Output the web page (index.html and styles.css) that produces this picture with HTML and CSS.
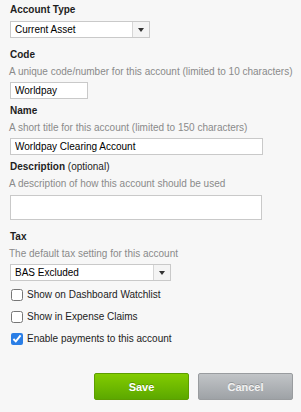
FILE: index.html
```html
<!DOCTYPE html>
<html lang="en">

<head>
    <meta charset="UTF-8">
    <meta name="viewport" content="width=device-width, initial-scale=1.0">
    <title>Edit Account</title>
    <link rel="stylesheet" href="styles.css">
</head>

<body>
    <form class="account-form">
        <!-- Account type -->
        <div class="field field-wide">
            <label class="field-label">Account Type</label>
            <div class="select select-type">
                <span class="select-value">Current Asset</span>
                <span class="select-arrow"></span>
            </div>
        </div>
        <!-- Code -->
        <div class="field">
            <label class="field-label">Code</label>
            <div class="field-help">A unique code/number for this account (limited to 10 characters)</div>
            <input type="text" class="text-input input-code" value="Worldpay">
        </div>
        <!-- Name -->
        <div class="field">
            <label class="field-label">Name</label>
            <div class="field-help">A short title for this account (limited to 150 characters)</div>
            <input type="text" class="text-input input-name" value="Worldpay Clearing Account">
        </div>
        <!-- Description -->
        <div class="field field-wide">
            <label class="field-label">Description <span class="optional">(optional)</span></label>
            <div class="field-help">A description of how this account should be used</div>
            <textarea class="text-input input-desc"></textarea>
        </div>
        <!-- Tax -->
        <div class="field">
            <label class="field-label">Tax</label>
            <div class="field-help">The default tax setting for this account</div>
            <div class="select select-tax">
                <span class="select-value">BAS Excluded</span>
                <span class="select-arrow"></span>
            </div>
        </div>
        <!-- Options -->
        <div class="options">
            <label class="check-row"><input type="checkbox"> Show on Dashboard Watchlist</label>
            <label class="check-row"><input type="checkbox"> Show in Expense Claims</label>
            <label class="check-row"><input type="checkbox" checked> Enable payments to this account</label>
        </div>
        <!-- Buttons -->
        <div class="actions">
            <button type="button" class="btn btn-save">Save</button>
            <button type="button" class="btn btn-cancel">Cancel</button>
        </div>
    </form>
</body>

</html>
```

FILE: styles.css
```css
body {
    background-color: #f7f7f7;
    font-family: 'Liberation Sans', Arial, sans-serif;
    font-size: 10px;
    color: #222;
    margin: 0;
    padding: 4px 8px 0 10px;
}

.field {
    display: flex;
    flex-direction: column;
    align-items: flex-start;
    margin-bottom: 6px;
}

.field-wide {
    margin-bottom: 11px;
}

.field-label {
    font-weight: bold;
    line-height: 12px;
    color: #1e1e1e;
    margin-bottom: 5px;
}

.optional {
    font-weight: normal;
}

.field-help {
    line-height: 12px;
    color: #8a8a8a;
    margin-bottom: 4px;
    margin-left: -1px;
}

.text-input {
    box-sizing: border-box;
    height: 17px;
    margin: 0;
    padding: 0 4px;
    background-color: #fff;
    border: 1px solid #c9c9c9;
    border-radius: 0;
    font-family: 'Liberation Sans', Arial, sans-serif;
    font-size: 10px;
    color: #000;
    outline: none;
}

.input-code {
    width: 78px;
}

.input-name {
    width: 253px;
}

.input-desc {
    width: 252px;
    height: 25px;
    margin-top: 1px;
    resize: none;
}

.select {
    box-sizing: border-box;
    display: flex;
    height: 17px;
    background-color: #fff;
    border: 1px solid #c9c9c9;
}

.select-type {
    width: 140px;
}

.select-tax {
    width: 161px;
}

.select-value {
    flex: 1;
    padding-left: 4px;
    line-height: 15px;
    color: #000;
}

.select-arrow {
    width: 16px;
    border-left: 1px solid #d6d6d6;
    background-color: #f4f4f4;
    display: flex;
    align-items: center;
    justify-content: center;
}

.select-arrow::after {
    content: "";
    border-left: 3px solid transparent;
    border-right: 3px solid transparent;
    border-top: 4px solid #333;
    margin-top: 1px;
}

.options {
    display: flex;
    flex-direction: column;
    gap: 9px;
    margin-top: 7px;
}

.check-row {
    display: flex;
    align-items: center;
    gap: 4px;
    height: 13px;
    color: #222;
}

.check-row input {
    width: 12px;
    height: 12px;
    margin: 0 0 0 1px;
    accent-color: #2a7ee6;
}

.actions {
    display: flex;
    justify-content: flex-end;
    gap: 9px;
    margin-top: 28px;
}

.btn {
    width: 95px;
    height: 27px;
    border-radius: 2px;
    font-family: 'Liberation Sans', Arial, sans-serif;
    font-size: 11px;
    font-weight: bold;
    color: #fff;
    cursor: pointer;
}

.btn-save {
    background: linear-gradient(#82cc00, #5ca800);
    border: 1px solid #5d9e00;
    text-shadow: 0 -1px 0 rgba(0, 0, 0, 0.25);
}

.btn-cancel {
    background: linear-gradient(#c1c4c7, #9ea2a6);
    border: 1px solid #999c9f;
    color: #f2f2f2;
    text-shadow: 0 -1px 0 rgba(0, 0, 0, 0.2);
}
```
